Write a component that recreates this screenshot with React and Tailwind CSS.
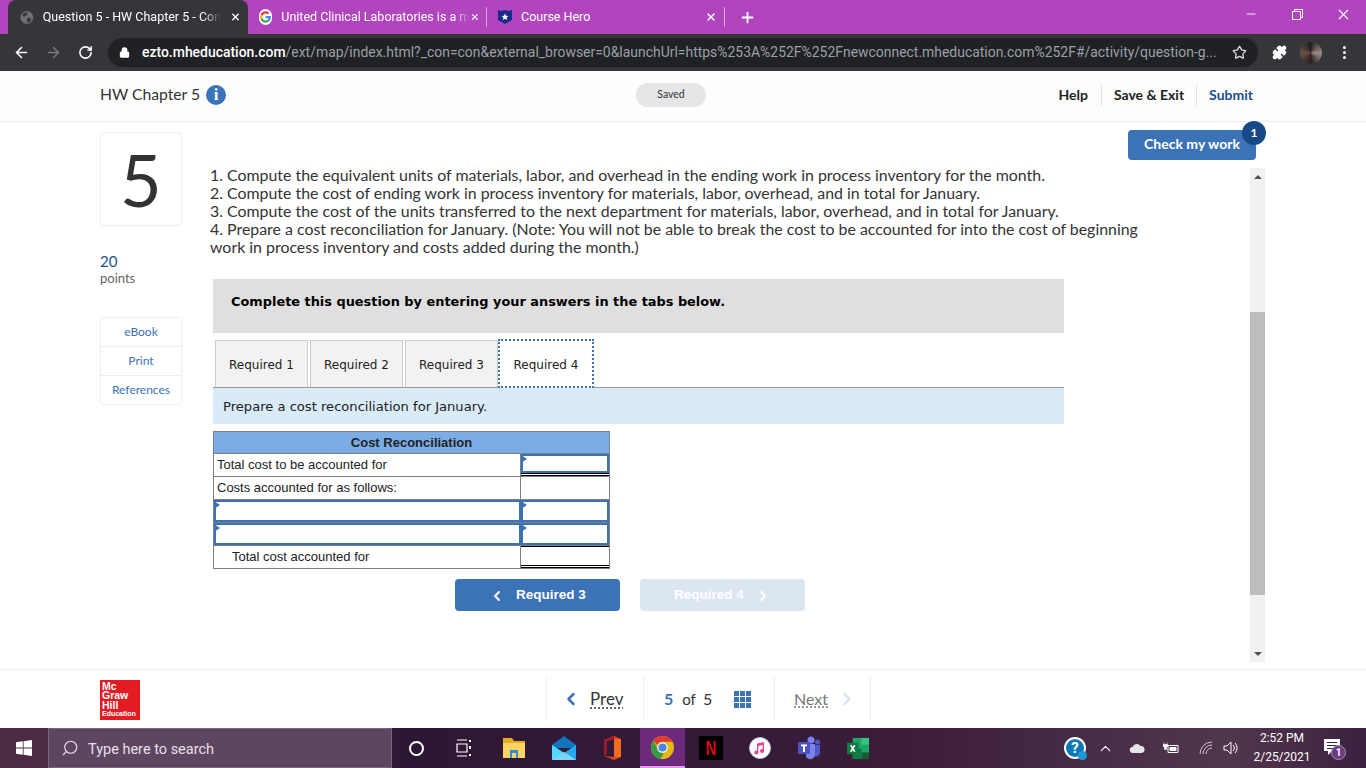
import React from 'react';
import { ArrowLeft, ArrowRight, RotateCw, Lock, Star, Puzzle, X, Plus, Minus, ChevronLeft, ChevronRight, ChevronUp, Search } from 'lucide-react';

const GoogleIcon = () => (
  <svg viewBox="0 0 48 48" className="h-4 w-4 rounded-full bg-white p-[1px]">
    <path fill="#EA4335" d="M24 9.500c3.500 0 6.700 1.200 9.200 3.600l6.900-6.900C35.900 2.400 30.500 0 24 0 14.600 0 6.500 5.400 2.600 13.200l8 6.200C12.400 13.700 17.700 9.500 24 9.500z" />
    <path fill="#4285F4" d="M46.500 24.500c0-1.600-.1-3.100-.4-4.500H24v9h12.700c-.5 3-2.200 5.500-4.700 7.200l7.700 6c4.500-4.200 6.800-10.300 6.800-17.700z" />
    <path fill="#FBBC05" d="M10.600 28.600c-.5-1.400-.8-3-.8-4.600s.3-3.200.8-4.600l-8-6.200C.9 16.500 0 20.100 0 24s.9 7.500 2.600 10.800l8-6.200z" />
    <path fill="#34A853" d="M24 48c6.500 0 11.900-2.100 15.900-5.800l-7.700-6c-2.200 1.400-4.900 2.300-8.200 2.300-6.300 0-11.600-4.200-13.400-10l-8 6.200C6.500 42.600 14.600 48 24 48z" />
  </svg>
);

const ShieldIcon = () => (
  <svg viewBox="0 0 16 16" className="h-4 w-4">
    <path fill="#1c2a8c" d="M1 1l3.500 1L8 1l3.500 1L15 1v10l-7 4-7-4z" />
    <path fill="#fff" d="M8 4.500l1 2.300 2.400.2-1.800 1.600.6 2.400L8 9.700l-2.200 1.300.6-2.400L4.600 7l2.400-.2z" />
  </svg>
);

const GlobeIcon = () => (
  <svg viewBox="0 0 16 16" className="h-[15px] w-[15px]">
    <circle cx="8" cy="8" r="7.500" fill="#6f7073" />
    <path fill="#35363a" d="M4 3l4-1 1 2-2 2-3 1-1-2zM9 8l4 1-1 4-3 1-1-3z" />
  </svg>
);

const WindowsLogo = () => (
  <svg viewBox="0 0 16 16" className="h-4 w-4" fill="#fff">
    <path d="M0 2.300L6.800 1.300V7.600H0zM7.600 1.200L16 0V7.600H7.600zM0 8.400H6.800V14.700L0 13.700zM7.600 8.400H16V16L7.600 14.800z" />
  </svg>
);

const TaskView = () => (
  <svg viewBox="0 0 16 18" className="h-[18px] w-4" fill="none" stroke="#fff" strokeWidth="1.200">
    <path d="M1 1h10M1 17h10M1 5h10v8H1z" />
    <path d="M14 1v2M14 7v3M14 15v2" strokeWidth="2" />
  </svg>
);

const FolderIcon = () => (
  <svg viewBox="0 0 22 22" className="h-[22px] w-[22px]">
    <path fill="#e8a923" d="M0 1h9l2 3h11v17H0z" />
    <path fill="#fcd462" d="M0 6h22v15H0z" />
    <path fill="#2f8fd4" d="M7 13h8v8h-2v-5H9v5H7z" />
  </svg>
);

const MailIcon = () => (
  <svg viewBox="0 0 24 24" className="h-6 w-6">
    <path fill="#1274bd" d="M12 0l12 9v3H0V9z" />
    <path fill="#28a8ea" d="M0 9l12 8 12-8v15H0z" />
    <path fill="#50d9ff" d="M0 24V9l12 8z" />
    <path fill="#7fd4f5" d="M0 24l12-8 12 8z" />
  </svg>
);

const OfficeIcon = () => (
  <svg viewBox="0 0 20 24" className="h-6 w-5">
    <path fill="#e8431f" d="M12 0l7 3v18l-7 3-10-4 10 1V3L5 5v12l-3 3V4z" />
    <path fill="#9e1a2b" d="M12 0v3L5 5v12l-3 3V4z" />
    <path fill="#f36b21" d="M12 3l7 0v18l-7 0z" />
  </svg>
);

const ChromeIcon = () => (
  <svg viewBox="0 0 24 24" className="h-[23px] w-[23px]">
    <circle cx="12" cy="12" r="12" fill="#e8b80f" />
    <path fill="#dd3b2f" d="M12 0a12 12 0 0 1 10.400 6H12a6 6 0 0 0-5.500 3.500L2.300 5A12 12 0 0 1 12 0z" />
    <path fill="#3a9b46" d="M2.300 5l5 8.800a6 6 0 0 0 6 4L10 24A12 12 0 0 1 2.300 5z" />
    <circle cx="12" cy="12" r="5.500" fill="#fff" />
    <circle cx="12" cy="12" r="4.300" fill="#4a86e8" />
  </svg>
);

const MusicIcon = () => (
  <svg viewBox="0 0 22 22" className="h-[22px] w-[22px]">
    <circle cx="11" cy="11" r="10.500" fill="#fff" stroke="#b7c6ea" />
    <path fill="#e8418f" d="M8 6.500l7-1.500v9a2 2 0 1 1-1.300-1.900V8L9.300 9v6.500a2 2 0 1 1-1.300-1.900z" />
  </svg>
);

const TeamsIcon = () => (
  <svg viewBox="0 0 24 24" className="h-6 w-6">
    <circle cx="14" cy="4" r="3.500" fill="#7b83eb" />
    <circle cx="20.500" cy="6" r="2.500" fill="#5059c9" />
    <path fill="#5059c9" d="M17 9h6v8a4 4 0 0 1-6 3z" />
    <path fill="#7b83eb" d="M9 8h9v11a5 5 0 0 1-9 2z" />
    <rect x="1" y="6" width="12" height="12" fill="#4b53bc" rx="1" />
    <path fill="#fff" d="M4 8.500h6v1.700H8V16H6v-5.800H4z" />
  </svg>
);

const ExcelIcon = () => (
  <svg viewBox="0 0 24 24" className="h-[23px] w-[23px]">
    <path fill="#21a366" d="M6 1h17v22H6z" />
    <path fill="#33c481" d="M15 1h8v7h-8z" />
    <path fill="#107c41" d="M6 12h9v11H6z" />
    <path fill="#185c37" d="M15 16h8v7h-8z" />
    <rect x="0" y="6" width="12" height="12" fill="#107c41" />
    <path fill="#fff" d="M3 8.500h2l1 2 1-2h2l-2 3.500 2 3.500H7l-1-2-1 2H3l2-3.500z" />
  </svg>
);

const HelpBubble = () => (
  <div className="relative flex h-[22px] w-[22px] items-center justify-center rounded-full bg-white">
    <div className="flex h-[18px] w-[18px] items-center justify-center rounded-full bg-[#0b78b8] text-[15px] font-bold leading-none text-white">?</div>
    <div className="absolute -bottom-[1px] -right-[1px] h-[9px] w-[9px] rounded-full bg-[#1d9ad6]" />
  </div>
);

const CloudIcon = () => (
  <svg viewBox="0 0 16 10" className="h-[10px] w-4" fill="#e5e5e5">
    <path d="M4 10a3 3 0 0 1-.5-6A4.500 4.500 0 0 1 11.500 3 3.500 3.500 0 0 1 12.500 10z" />
  </svg>
);

const BatteryIcon = () => (
  <svg viewBox="0 0 16 14" className="h-[14px] w-4" fill="none" stroke="#fff" strokeWidth="1">
    <path d="M5 4.500h10v7H5z" />
    <path d="M7 6.500h6v3H7z" fill="#fff" />
    <path d="M1 1.500v2M4 1.500v2M0 3.500h5v2H3.500v3H1.500v-3H0z" fill="#fff" strokeWidth="0.600" />
  </svg>
);

const NotificationIcon = () => (
  <div className="relative h-[18px] w-4">
    <svg viewBox="0 0 16 16" className="h-4 w-4">
      <path fill="#fff" d="M0 0h16v12H8l-4 4v-4H0z" />
      <path stroke="#3c2140" strokeWidth="1" d="M3 3.500h10M3 6.500h10M3 9.500h6" />
    </svg>
    <div className="absolute -bottom-[3px] -right-[6px] flex h-[15px] w-[15px] items-center justify-center rounded-full border border-[#a98fb5] bg-[#6c3a80] text-[10px] font-bold">1</div>
  </div>
);

const InputCell = ({ className }) => (
  <div className={`relative border-2 border-[#3a72b4] ${className}`}>
    <div className="absolute -left-[2px] -top-[1px] h-0 w-0 border-y-[4px] border-l-[6px] border-y-transparent border-l-[#3a72b4]" />
  </div>
);

const InputRow = () => (
  <div className="flex h-[23px] border-b border-[#7f7f7f]">
    <InputCell className="w-[307px]" />
    <InputCell className="flex-1" />
  </div>
);

const App = () => {
  return (
    <div className="flex h-[768px] w-[1366px] flex-col overflow-hidden bg-white font-['Lato',sans-serif]">
      {/* browser tabs */}
      <div className="flex h-[34px] items-center bg-[#b045bd] pl-2 font-['Roboto',sans-serif] text-[12.500px] text-white">
        <div className="flex h-[34px] w-[240px] items-center gap-[9px] rounded-t-lg bg-[#35363a] pl-[12px] pr-[7px]">
          <GlobeIcon />
          <span className="whitespace-nowrap [mask-image:linear-gradient(to_right,black_90%,transparent)]">Question 5 - HW Chapter 5 - Con</span>
          <X size={12} strokeWidth={3} className="ml-auto" />
        </div>
        <div className="flex h-[34px] w-[238px] items-center pl-[11px]">
          <GoogleIcon />
          <span className="ml-[9px] whitespace-nowrap [mask-image:linear-gradient(to_right,black_92%,transparent)]">United Clinical Laboratories is a m</span>
          <X size={12} strokeWidth={3} className="ml-auto mr-[6px]" />
        </div>
        <div className="h-[20px] w-px bg-[#d9a6df]" />
        <div className="flex h-[34px] w-[237px] items-center pl-[10px]">
          <ShieldIcon />
          <span className="ml-[8px]">Course Hero</span>
          <X size={12} strokeWidth={3} className="ml-auto mr-[7px]" />
        </div>
        <div className="h-[20px] w-px bg-[#d9a6df]" />
        <div className="flex h-[34px] w-[44px] items-center justify-center">
          <Plus size={17} strokeWidth={2.500} />
        </div>
        <div className="ml-auto flex h-[34px] items-center pb-[6px]">
          <div className="flex w-[46px] justify-center"><Minus size={14} strokeWidth={1.500} /></div>
          <div className="relative flex w-[46px] justify-center">
            <div className="relative h-[11px] w-[11px]">
              <div className="absolute right-0 top-0 h-[9px] w-[9px] border border-white" />
              <div className="absolute bottom-0 left-0 h-[9px] w-[9px] border border-white bg-[#b045bd]" />
            </div>
          </div>
          <div className="flex w-[46px] justify-center"><X size={17} strokeWidth={1.500} /></div>
        </div>
      </div>

      {/* browser toolbar */}
      <div className="flex h-[37px] items-center bg-[#35363a] text-white">
        <div className="flex w-[108px] items-center gap-[15px] pl-[13px]">
          <ArrowLeft size={17} strokeWidth={2.200} />
          <ArrowRight size={17} strokeWidth={2.200} className="text-[#77787b]" />
          <RotateCw size={15} strokeWidth={2.500} className="ml-[1px]" />
        </div>
        <div className="flex h-[29px] w-[1150px] items-center rounded-full bg-[#202124] pl-[11px] pr-[11px] font-['Roboto',sans-serif] text-[13.950px]">
          <Lock size={11} fill="#fff" strokeWidth={2.500} className="shrink-0" />
          <span className="ml-[12px] whitespace-nowrap font-medium">ezto.mheducation.com<span className="font-normal text-[#9aa0a6]">/ext/map/index.html?_con=con&amp;external_browser=0&amp;launchUrl=https%253A%252F%252Fnewconnect.mheducation.com%252F#/activity/question-g...</span></span>
          <Star size={15} className="ml-auto shrink-0 text-[#dfe1e5]" />
        </div>
        <Puzzle size={15} fill="#fff" className="ml-[14px] shrink-0" />
        <div className="ml-[13px] h-[22px] w-[22px] shrink-0 rounded-full bg-[conic-gradient(#2c2226,#9c8d84,#2b1e22,#6b5248,#1f1a1d)]" />
        <div className="ml-[21px] flex flex-col gap-[2px]">
          <div className="h-[3px] w-[3px] rounded-full bg-white" />
          <div className="h-[3px] w-[3px] rounded-full bg-white" />
          <div className="h-[3px] w-[3px] rounded-full bg-white" />
        </div>
      </div>

      {/* assignment header */}
      <div className="flex h-[51px] items-center border-b border-[#ececec] bg-[#fdfdfd] pb-[2px] pl-[100px] pr-[113px]">
        <div className="flex w-[536px] items-center">
          <span className="text-[15.700px] text-[#333]">HW Chapter 5</span>
          <div className="ml-[6px] flex h-[20px] w-[20px] items-center justify-center rounded-full bg-[#3b73b9] font-['Liberation_Serif',serif] text-[17px] font-bold text-white">i</div>
        </div>
        <div className="flex h-[24px] w-[70px] items-center justify-center rounded-full bg-[#e6e5e8] pb-[1px] text-[10.500px] text-[#333]">Saved</div>
        <div className="ml-auto flex items-center text-[14px] font-bold">
          <span className="border-r border-[#e5e5e5] pr-[13px] leading-[22px] text-[#222]">Help</span>
          <span className="border-r border-[#e5e5e5] px-[12px] leading-[22px] text-[#222]">Save &amp; Exit</span>
          <span className="pl-[12px] leading-[22px] text-[#1c4f8f]">Submit</span>
        </div>
      </div>

      {/* main */}
      <div className="flex h-[548px] border-b border-[#ececec] pl-[100px]">
        <div className="w-[82px] pt-[10px]">
          <div className="flex h-[94px] items-center justify-center rounded border border-[#eeeeee] text-[72px] leading-none text-[#333]">5</div>
          <div className="mt-[26px] text-[15px] leading-[18px] text-[#1c4f8f]">20</div>
          <div className="text-[13px] leading-[16px] text-[#666]">points</div>
          <div className="mt-[31px] rounded border border-[#eeeeee] text-center text-[12px] text-[#3b73b9]">
            <div className="flex h-[29px] items-center justify-center border-b border-[#eeeeee]">eBook</div>
            <div className="flex h-[29px] items-center justify-center border-b border-[#eeeeee]">Print</div>
            <div className="flex h-[28px] items-center justify-center">References</div>
          </div>
        </div>

        <div className="ml-[28px] flex flex-1 flex-col pt-[8px]">
          <div className="relative ml-[918px] flex h-[30px] w-[128px] items-center justify-center rounded-sm bg-[#3b73b6] pb-[3px] text-[14px] font-bold text-white">
            Check my work
            <div className="absolute -right-[10px] -top-[9px] flex h-[24px] w-[24px] items-center justify-center rounded-full bg-[#174a85] text-[12px]">1</div>
          </div>

          <div className="mt-[8px] flex h-[494px]">
            <div className="w-[1040px]">
              <div className="-mt-[2px] w-[950px] text-[15.900px] leading-[18px] text-[#333]">
                <p>1. Compute the equivalent units of materials, labor, and overhead in the ending work in process inventory for the month.</p>
                <p>2. Compute the cost of ending work in process inventory for materials, labor, overhead, and in total for January.</p>
                <p>3. Compute the cost of the units transferred to the next department for materials, labor, overhead, and in total for January.</p>
                <p>4. Prepare a cost reconciliation for January. (Note: You will not be able to break the cost to be accounted for into the cost of beginning work in process inventory and costs added during the month.)</p>
              </div>

              <div className="ml-[3px] mt-[23px] w-[851px] font-['DejaVu_Sans',sans-serif]">
                <div className="h-[54px] bg-[#dfdfdf] pl-[18px] pt-[14px] text-[12.900px] font-bold leading-[18px] text-black">Complete this question by entering your answers in the tabs below.</div>
                <div className="mt-[7px] flex h-[48px] items-end border-b border-[#999] pl-[2px] text-[12px] text-[#222]">
                  <div className="flex h-[47px] w-[93px] items-center justify-center border border-b-0 border-[#ccc] bg-[#f2f2f2] pt-[2px]">Required 1</div>
                  <div className="ml-[2px] flex h-[47px] w-[93px] items-center justify-center border border-b-0 border-[#ccc] bg-[#f2f2f2] pt-[2px]">Required 2</div>
                  <div className="ml-[2px] flex h-[47px] w-[93px] items-center justify-center border border-b-0 border-[#ccc] bg-[#f2f2f2] pt-[2px]">Required 3</div>
                  <div className="flex h-[49px] w-[96px] translate-y-[1px] items-center justify-center border-2 border-dotted border-[#3b73b6] bg-white pt-[2px]">Required 4</div>
                </div>
                <div className="flex h-[36px] items-center bg-[#d9ebf9] pl-[10px] pt-[2px] text-[13.100px] text-[#222]">Prepare a cost reconciliation for January.</div>

                <div className="mt-[7px] w-[397px] border border-[#7f7f7f] font-['Liberation_Sans',sans-serif] text-[13px] text-[#222]">
                  <div className="flex h-[22px] items-center justify-center border-b border-[#7f7f7f] bg-[#7aace6] font-bold">Cost Reconciliation</div>
                  <div className="flex h-[23px] border-b border-[#7f7f7f]">
                    <div className="flex w-[307px] items-center border-r border-[#7f7f7f] pl-[3px]">Total cost to be accounted for</div>
                    <div className="flex-1 border-b-[3px] border-double border-black">
                      <InputCell className="h-full border-b-[#3a72b4] border-t-[#3a72b4]" />
                    </div>
                  </div>
                  <div className="flex h-[23px] border-b border-[#7f7f7f]">
                    <div className="flex w-[307px] items-center border-r border-[#7f7f7f] pl-[3px]">Costs accounted for as follows:</div>
                    <div className="flex-1" />
                  </div>
                  <InputRow />
                  <InputRow />
                  <div className="flex h-[22px]">
                    <div className="flex w-[307px] items-center border-r border-[#7f7f7f] pl-[18px]">Total cost accounted for</div>
                    <div className="flex-1 border-b-[3px] border-t border-b-black border-t-black [border-bottom-style:double]" />
                  </div>
                </div>

                <div className="mt-[10px] flex gap-[20px] pl-[242px] font-['Liberation_Sans',sans-serif] text-[13.500px] font-bold text-white">
                  <div className="flex h-[32px] w-[165px] items-center justify-center gap-[11px] rounded-sm bg-[#3b73b6] pt-[1px]">
                    <ChevronLeft size={16} strokeWidth={3} />
                    Required 3
                  </div>
                  <div className="flex h-[32px] w-[165px] items-center justify-center gap-[11px] rounded-sm bg-[#dce6f1] pt-[1px]">
                    Required 4
                    <ChevronRight size={16} strokeWidth={3} />
                  </div>
                </div>
              </div>
            </div>

            {/* scrollbar */}
            <div className="flex w-[15px] flex-col bg-[#f1f1f1]">
              <div className="flex h-[17px] items-center justify-center">
                <div className="h-0 w-0 border-x-[4px] border-b-[4px] border-x-transparent border-b-[#505050]" />
              </div>
              <div className="mt-[127px] h-[283px] bg-[#bdbdbd]" />
              <div className="mt-auto flex h-[17px] items-center justify-center">
                <div className="h-0 w-0 border-x-[4px] border-t-[4px] border-x-transparent border-t-[#505050]" />
              </div>
            </div>
          </div>
        </div>
      </div>

      {/* footer */}
      <div className="flex h-[58px] items-center pl-[100px]">
        <div className="mt-[2px] flex h-[40px] w-[40px] flex-col justify-center bg-[#e31b23] pl-[2px] font-['Liberation_Sans',sans-serif] font-bold text-white">
          <span className="text-[10.500px] leading-[9.500px]">Mc</span>
          <span className="text-[10.500px] leading-[9.500px]">Graw</span>
          <span className="text-[10.500px] leading-[9.500px]">Hill</span>
          <span className="text-[7px] leading-[8px]">Education</span>
        </div>
        <div className="ml-[406px] flex h-[45px] items-center border-x border-[#eeeeee] text-[17px] text-[#333]">
          <div className="flex w-[96px] items-center pl-[14px]">
            <ChevronLeft size={20} strokeWidth={3} className="text-[#3b73b6]" />
            <span className="ml-[9px] underline decoration-dotted underline-offset-2">Prev</span>
          </div>
          <div className="flex h-[45px] w-[131px] items-center border-l border-[#eeeeee] pl-[20px] text-[16px]">
            <span className="font-bold text-[#3b73b6]">5</span>
            <span className="ml-[9px] text-[15px]">of</span>
            <span className="ml-[7px]">5</span>
            <div className="ml-[22px] grid grid-cols-3 gap-px">
              {Array.from({ length: 9 }, (_, i) => (
                <div key={i} className="h-[5px] w-[5px] bg-[#3b73b6]" />
              ))}
            </div>
          </div>
          <div className="flex h-[45px] w-[96px] items-center border-l border-[#eeeeee] pl-[19px] text-[16px] text-[#777]">
            <span className="underline decoration-dotted underline-offset-2">Next</span>
            <ChevronRight size={20} strokeWidth={3} className="ml-[9px] text-[#dce6f1]" />
          </div>
        </div>
      </div>

      {/* taskbar */}
      <div className="flex h-[40px] items-center bg-[linear-gradient(to_right,#4b2b43_0%,#4b2b43_3.500%,#2e1734_30%,#3a1c3a_65%,#52364d_90%,#3c2140_100%)] font-['Roboto',sans-serif] text-white">
        <div className="flex w-[48px] justify-center"><WindowsLogo /></div>
        <div className="flex h-[40px] w-[344px] items-center border border-[#7d6780] bg-[#5e4561] pl-[12px] text-[14.500px] text-[#e6e0e6]">
          <Search size={18} strokeWidth={1.500} className="-scale-x-100" />
          <span className="ml-[9px] pt-[3px]">Type here to search</span>
        </div>
        <div className="flex w-[48px] justify-center">
          <div className="h-[15px] w-[15px] rounded-full border-2 border-white" />
        </div>
        <div className="flex w-[48px] justify-center"><TaskView /></div>
        <div className="flex w-[52px] justify-center"><FolderIcon /></div>
        <div className="flex w-[48px] justify-center"><MailIcon /></div>
        <div className="flex w-[48px] justify-center"><OfficeIcon /></div>
        <div className="ml-[4px] flex h-[40px] w-[45px] items-center justify-center border-b-2 border-[#e39be8] bg-[#6c2b7a]"><ChromeIcon /></div>
        <div className="flex w-[52px] justify-center">
          <div className="flex h-[24px] w-[24px] items-center justify-center bg-black font-['Liberation_Sans',sans-serif] text-[20px] font-bold text-[#e50914]"><span className="scale-x-75">N</span></div>
        </div>
        <div className="flex w-[46px] justify-center"><MusicIcon /></div>
        <div className="flex w-[52px] justify-center"><TeamsIcon /></div>
        <div className="flex w-[46px] justify-center"><ExcelIcon /></div>
        <div className="ml-[183px]"><HelpBubble /></div>
        <ChevronUp size={17} strokeWidth={1.500} className="ml-[11px]" />
        <div className="ml-[15px]"><CloudIcon /></div>
        <div className="ml-[18px]"><BatteryIcon /></div>
        <svg viewBox="0 0 16 16" className="ml-[19px] h-4 w-4" fill="none" stroke="#cfc7cf" strokeWidth="1">
          <path d="M2 14A12 12 0 0 1 14 2M5 14A9 9 0 0 1 14 5M8 14A6 6 0 0 1 14 8" />
        </svg>
        <svg viewBox="0 0 16 16" className="ml-[9px] h-4 w-4" fill="none" stroke="#fff" strokeWidth="1">
          <path d="M1 6h3l4-4v12l-4-4H1zM10 5a4 4 0 0 1 0 6M12 3a7 7 0 0 1 0 10" />
        </svg>
        <div className="ml-[16px] flex w-[54px] flex-col items-center text-[12px] leading-[19px]">
          <span>2:52 PM</span>
          <span>2/25/2021</span>
        </div>
        <div className="ml-[15px]"><NotificationIcon /></div>
      </div>
    </div>
  );
};

export default App;
